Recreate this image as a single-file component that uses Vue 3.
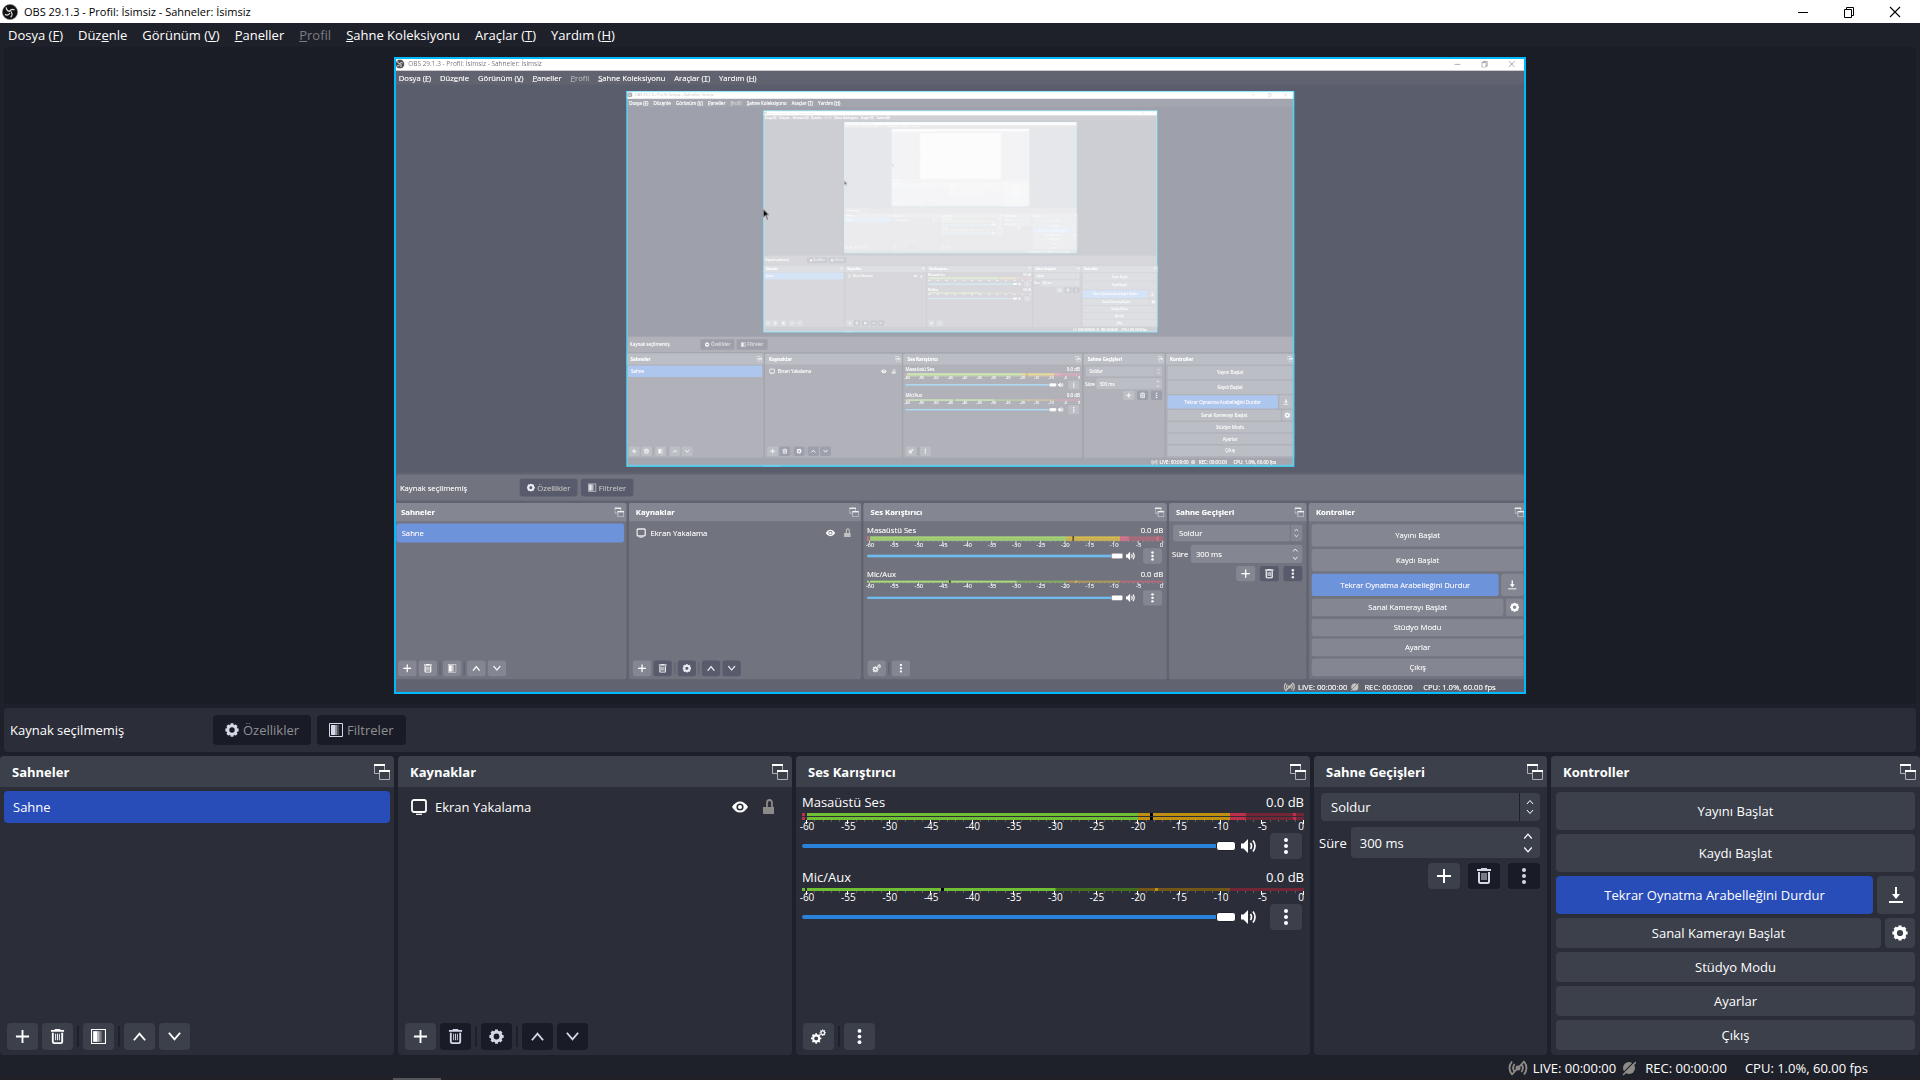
<template>
  <div :class="['studio', { nested: depth > 0 }]">
    <!-- shared icons and the capture gamma, only needed once -->
    <svg v-if="depth === 0" class="defs" aria-hidden="true">
      <filter id="capture-gamma" color-interpolation-filters="sRGB" x="0" y="0" width="1" height="1">
        <feComponentTransfer>
          <feFuncR type="gamma" exponent="0.455" />
          <feFuncG type="gamma" exponent="0.455" />
          <feFuncB type="gamma" exponent="0.455" />
        </feComponentTransfer>
      </filter>
      <symbol id="i-logo" viewBox="0 0 16 16">
        <circle cx="8" cy="8" r="7.6" fill="#111" stroke="#777" stroke-width=".6" />
        <g fill="none" stroke="#ddd" stroke-width="1.2">
          <path d="M4.2 3.4c.2 2.4 1.6 3.9 3.9 4" />
          <path d="M12.6 6c-2-1-4-.5-5 1.4" />
          <path d="M8.6 13.2c1.8-1.4 2.1-3.8.2-5.8" />
          <path d="M3 10.4c2 1.1 4 .4 5-1.4" />
        </g>
      </symbol>
      <symbol id="i-minimize" viewBox="0 0 12 12">
        <path d="M1 6.5h10" stroke="#000" />
      </symbol>
      <symbol id="i-restore" viewBox="0 0 12 12">
        <path d="M1.5 3.5h7v8h-7zM3.5 3.5v-2h7v8h-2" fill="none" stroke="#000" />
      </symbol>
      <symbol id="i-close" viewBox="0 0 12 12">
        <path d="M1 1l10 10M11 1L1 11" stroke="#000" stroke-width="1.1" />
      </symbol>
      <symbol id="i-popout" viewBox="0 0 16 16">
        <g fill="none" stroke="currentColor" opacity=".75">
          <path d="M5 9.5H.5v-9h10V6" />
          <path d="M5.5 6.5h10v9h-10z" />
        </g>
        <path d="M0 0h11v2H0zM5 6h11v2H5z" fill="#fff" />
      </symbol>
      <symbol id="i-plus" viewBox="0 0 16 16">
        <path d="M8 1v14M1 8h14" stroke="currentColor" stroke-width="2" />
      </symbol>
      <symbol id="i-trash" viewBox="0 0 16 16">
        <path d="M5 0h6v1h4v2H1V1h4z" fill="currentColor" />
        <path d="M3 4v9.5q0 1.5 1.5 1.5h7q1.5 0 1.5-1.5V4" fill="none" stroke="currentColor" stroke-width="2" />
        <path d="M6 5v7M8 5v7M10 5v7" stroke="currentColor" />
      </symbol>
      <symbol id="i-filter" viewBox="0 0 14 14">
        <path d="M.5.5h13v13H.5z" fill="none" stroke="currentColor" />
        <path d="M2 2h4v10H2z" fill="currentColor" />
        <path d="M6 2h2v10H6z" fill="currentColor" opacity=".65" />
        <path d="M8 2h2v10H8z" fill="currentColor" opacity=".3" />
      </symbol>
      <symbol id="i-gear" viewBox="0 0 16 16">
        <circle cx="8" cy="8" r="4.8" fill="none" stroke="currentColor" stroke-width="3.4" />
        <path d="M8 .4v2.6M8 13v2.6M.4 8h2.6M13 8h2.6M2.7 2.7l1.8 1.8M11.5 11.5l1.8 1.8M13.3 2.7l-1.8 1.8M4.5 11.5l-1.8 1.8" stroke="currentColor" stroke-width="3.2" />
      </symbol>
      <symbol id="i-gears" viewBox="0 0 16 16">
        <circle cx="5.5" cy="10" r="3.2" fill="none" stroke="currentColor" stroke-width="2.2" />
        <path d="M5.5 4.4v2M5.5 13.6v2M0 10h2M9 10h2M1.6 6.1l1.4 1.4M8 12.5l1.4 1.4M9.4 6.1L8 7.5M3 12.5l-1.4 1.4" stroke="currentColor" stroke-width="1.8" />
        <circle cx="12.5" cy="4" r="1.9" fill="none" stroke="currentColor" stroke-width="1.3" />
        <path d="M12.5.6v1.2M12.5 6.2v1.2M9.1 4h1.2M14.7 4h1.2M10.1 1.6l.8.8M14.1 5.6l.8.8M14.9 1.6l-.8.8M10.9 5.6l-.8.8" stroke="currentColor" stroke-width="1.2" />
      </symbol>
      <symbol id="i-up" viewBox="0 0 16 16">
        <path d="M2 12l6-7 6 7" fill="none" stroke="currentColor" stroke-width="2" />
      </symbol>
      <symbol id="i-down" viewBox="0 0 16 16">
        <path d="M2 4l6 7 6-7" fill="none" stroke="currentColor" stroke-width="2" />
      </symbol>
      <symbol id="i-dots" viewBox="0 0 16 16">
        <g fill="currentColor">
          <circle cx="8" cy="2" r="2" />
          <circle cx="8" cy="8" r="2" />
          <circle cx="8" cy="14" r="2" />
        </g>
      </symbol>
      <symbol id="i-display" viewBox="0 0 16 16">
        <rect x="1" y="1" width="14" height="12" rx="2" fill="none" stroke="currentColor" stroke-width="1.8" />
        <path d="M5 15.3h6" stroke="currentColor" stroke-width="1.2" />
      </symbol>
      <symbol id="i-eye" viewBox="0 0 16 16">
        <path d="M0 8q3.5-5.5 8-5.5T16 8q-3.5 5.5-8 5.5T0 8z" fill="currentColor" />
        <circle cx="8" cy="8" r="3.6" fill="#2b2d38" />
        <circle cx="8" cy="8" r="2" fill="currentColor" />
      </symbol>
      <symbol id="i-unlock" viewBox="0 0 16 16">
        <path d="M3 8h11v7H3z" fill="currentColor" />
        <path d="M12 8V4Q12 1 9.5 1T7 4v4" fill="none" stroke="currentColor" stroke-width="1.8" />
      </symbol>
      <symbol id="i-speaker" viewBox="0 0 16 16">
        <path d="M0 5.5h2.5L7 1v14l-4.5-4.5H0z" fill="currentColor" />
        <path d="M9.5 5q2 3 0 6M12 2.5q4 5.5 0 11" fill="none" stroke="currentColor" stroke-width="1.7" />
      </symbol>
      <symbol id="i-save" viewBox="0 0 16 16">
        <path d="M8 0v9M1 15h14" stroke="currentColor" stroke-width="2" />
        <path d="M4 7h8l-4 5z" fill="currentColor" />
      </symbol>
      <symbol id="i-live" viewBox="0 0 20 16">
        <g fill="none" stroke="currentColor" stroke-width="1.8">
          <path d="M4 1.500q-5 6.500 0 13M16 1.500q5 6.500 0 13M6.600 4q-3 4 0 8M13.400 4q3 4 0 8M3.500 15L16.500 1" />
          <circle cx="10" cy="8" r="1.6" />
        </g>
      </symbol>
      <symbol id="i-rec" viewBox="0 0 14 16">
        <circle cx="7" cy="8" r="6" fill="currentColor" />
        <path d="M0 14L13 1" stroke="#1f212a" stroke-width="1.2" />
        <path d="M1 15L14 2" stroke="currentColor" stroke-width="1.6" />
      </symbol>
    </svg>

    <header class="titlebar">
      <svg class="icon"><use href="#i-logo" /></svg>
      <span class="window-title">OBS 29.1.3 - Profil: İsimsiz - Sahneler: İsimsiz</span>
      <div class="window-buttons">
        <button v-for="name in ['minimize', 'restore', 'close']" :key="name" type="button" :aria-label="name">
          <svg><use :href="`#i-${name}`" /></svg>
        </button>
      </div>
    </header>

    <nav class="menubar">
      <button v-for="item in menu" :key="item.key + item.before" type="button" :disabled="item.disabled">
        {{ item.before }}<u>{{ item.key }}</u>{{ item.after }}
      </button>
    </nav>

    <main class="preview">
      <div class="canvas">
        <svg v-if="depth < maxDepth" class="capture" :viewBox="`0 0 ${base.width} ${base.height}`">
          <foreignObject :width="base.width" :height="base.height">
            <StudioWindow :depth="depth + 1" />
          </foreignObject>
        </svg>
        <!-- too small to show a window any more, just the light centre -->
        <div v-else class="washed-out"></div>
      </div>
    </main>

    <section class="context-bar">
      <span class="context-label">Kaynak seçilmemiş</span>
      <button type="button" class="btn" disabled>
        <svg class="icon"><use href="#i-gear" /></svg>Özellikler
      </button>
      <button type="button" class="btn" disabled>
        <svg class="icon"><use href="#i-filter" /></svg>Filtreler
      </button>
    </section>

    <div class="docks">
      <section class="dock">
        <h2>Sahneler<svg class="icon"><use href="#i-popout" /></svg></h2>
        <ul class="list">
          <li class="selected">Sahne</li>
        </ul>
        <div class="toolbar">
          <template v-for="(tool, i) in sceneTools" :key="i">
            <i v-if="tool === '|'" class="separator"></i>
            <button v-else type="button" class="btn tool" :aria-label="tool">
              <svg class="icon"><use :href="`#i-${tool}`" /></svg>
            </button>
          </template>
        </div>
      </section>

      <section class="dock">
        <h2>Kaynaklar<svg class="icon"><use href="#i-popout" /></svg></h2>
        <ul class="list">
          <li class="source">
            <svg class="icon"><use href="#i-display" /></svg>
            <span>Ekran Yakalama</span>
            <svg class="icon"><use href="#i-eye" /></svg>
            <svg class="icon unlocked"><use href="#i-unlock" /></svg>
          </li>
        </ul>
        <div class="toolbar">
          <template v-for="(tool, i) in sourceTools" :key="i">
            <i v-if="tool === '|'" class="separator"></i>
            <button v-else type="button" class="btn tool" :aria-label="tool" :disabled="tool !== 'plus'">
              <svg class="icon"><use :href="`#i-${tool}`" /></svg>
            </button>
          </template>
        </div>
      </section>

      <section class="dock">
        <h2>Ses Karıştırıcı<svg class="icon"><use href="#i-popout" /></svg></h2>
        <div class="mixer">
          <div v-for="ch in channels" :key="ch.name" class="channel">
            <div class="channel-head">
              <label :for="uid + ch.name">{{ ch.name }}</label>
              <span>0.0 dB</span>
            </div>
            <div v-for="n in ch.bars" :key="n" class="meter">
              <i :class="['clip', ch.clip]"></i>
              <div class="bar">
                <i class="level" :style="{ clipPath: `inset(0 ${100 - ch.level}% 0 0)` }"></i>
                <i class="mark" :style="{ left: ch.magnitude + '%' }"></i>
                <i :class="['mark', ch.holdColor]" :style="{ left: ch.hold + '%' }"></i>
              </div>
            </div>
            <div class="scale">
              <i v-for="n in 61" :key="n" :class="{ major: (n - 1) % 5 === 0 }"></i>
            </div>
            <div class="scale-labels">
              <span v-for="db in scaleLabels" :key="db">{{ db }}</span>
            </div>
            <div class="channel-controls">
              <input :id="uid + ch.name" type="range" min="0" max="100" value="100" />
              <button type="button" class="mute" aria-label="mute">
                <svg class="icon"><use href="#i-speaker" /></svg>
              </button>
              <button type="button" class="btn small" aria-label="menu">
                <svg class="icon"><use href="#i-dots" /></svg>
              </button>
            </div>
          </div>
        </div>
        <div class="toolbar">
          <button type="button" class="btn tool" aria-label="gears">
            <svg class="icon"><use href="#i-gears" /></svg>
          </button>
          <i class="separator"></i>
          <button type="button" class="btn tool" aria-label="dots">
            <svg class="icon"><use href="#i-dots" /></svg>
          </button>
        </div>
      </section>

      <section class="dock">
        <h2>Sahne Geçişleri<svg class="icon"><use href="#i-popout" /></svg></h2>
        <div class="transitions">
          <div class="select-box">
            <select aria-label="Sahne Geçişleri">
              <option>Soldur</option>
            </select>
            <span class="arrows">
              <svg><use href="#i-up" /></svg>
              <svg><use href="#i-down" /></svg>
            </span>
          </div>
          <div class="duration">
            <label :for="uid + 'duration'">Süre</label>
            <div class="spin-box">
              <input :id="uid + 'duration'" type="text" value="300 ms" />
              <span class="arrows">
                <svg><use href="#i-up" /></svg>
                <svg><use href="#i-down" /></svg>
              </span>
            </div>
          </div>
          <div class="transition-buttons">
            <button type="button" class="btn small" aria-label="plus">
              <svg class="icon"><use href="#i-plus" /></svg>
            </button>
            <button type="button" class="btn small" aria-label="trash" disabled>
              <svg class="icon"><use href="#i-trash" /></svg>
            </button>
            <button type="button" class="btn small" aria-label="dots" disabled>
              <svg class="icon"><use href="#i-dots" /></svg>
            </button>
          </div>
        </div>
      </section>

      <section class="dock">
        <h2>Kontroller<svg class="icon"><use href="#i-popout" /></svg></h2>
        <div class="controls">
          <div v-for="c in controls" :key="c.label" :class="['control-row', { tall: c.tall }]">
            <button type="button" :class="['btn', { active: c.active }]">{{ c.label }}</button>
            <button v-if="c.icon" type="button" class="btn square" :aria-label="c.icon">
              <svg class="icon"><use :href="`#i-${c.icon}`" /></svg>
            </button>
          </div>
        </div>
      </section>
    </div>

    <footer class="statusbar">
      <svg class="live-icon"><use href="#i-live" /></svg>
      <span class="live">LIVE: 00:00:00</span>
      <svg class="rec-icon"><use href="#i-rec" /></svg>
      <span class="rec">REC: 00:00:00</span>
      <span>CPU: 1.0%, 60.00 fps</span>
    </footer>
    <div class="taskbar"><i></i></div>

    <!-- the capture includes the mouse cursor -->
    <svg v-if="depth > 0" class="cursor" viewBox="0 0 13 21">
      <path d="M.5.5v17l4-4 3 7 2.5-1-3-7h5.5z" fill="#000" stroke="#fff" stroke-width=".6" />
    </svg>
  </div>
</template>

<script setup>
import { useId } from 'vue'

defineOptions({ name: 'StudioWindow' })

defineProps({
  depth: {
    type: Number,
    default: 0
  }
})

const uid = useId()

// Base canvas resolution of the display capture
const base = { width: 1920, height: 1080 }
const maxDepth = 5

const menu = [
  { before: 'Dosya (', key: 'F', after: ')' },
  { before: 'Düz', key: 'e', after: 'nle' },
  { before: 'Görünüm (', key: 'V', after: ')' },
  { before: '', key: 'P', after: 'aneller' },
  { before: '', key: 'P', after: 'rofil', disabled: true },
  { before: '', key: 'S', after: 'ahne Koleksiyonu' },
  { before: 'Araçlar (', key: 'T', after: ')' },
  { before: 'Yardım (', key: 'H', after: ')' }
]

const sceneTools = ['plus', 'trash', '|', 'filter', '|', 'up', 'down']
const sourceTools = ['plus', 'trash', '|', 'gear', '|', 'up', 'down']

// level, magnitude and hold are percentages of the -60..0 dB range
const channels = [
  { name: 'Masaüstü Ses', bars: 2, clip: 'red', level: 88.3, magnitude: 69, hold: 97.7, holdColor: 'red' },
  { name: 'Mic/Aux', bars: 1, clip: 'green', level: 50, magnitude: 27, hold: 70, holdColor: 'yellow' }
]

const scaleLabels = Array.from({ length: 13 }, (_, i) => i * 5 - 60)

const controls = [
  { label: 'Yayını Başlat', tall: true },
  { label: 'Kaydı Başlat', tall: true },
  { label: 'Tekrar Oynatma Arabelleğini Durdur', tall: true, active: true, icon: 'save' },
  { label: 'Sanal Kamerayı Başlat', icon: 'gear' },
  { label: 'Stüdyo Modu' },
  { label: 'Ayarlar' },
  { label: 'Çıkış' }
]
</script>

<style>
body {
  background: #1f212a;
}
</style>

<style scoped>
.studio {
  position: relative;
  display: flex;
  flex-direction: column;
  height: 100vh;
  overflow: hidden;
  background: #1f212a;
  color: #fff;
  font-family: "Open Sans", "Noto Sans", sans-serif;
  font-size: 13px;
  line-height: 18px;
}

.studio.nested {
  height: 100%;
  pointer-events: none;
}

.studio *,
.studio *::after {
  box-sizing: border-box;
}

.defs {
  position: absolute;
  width: 0;
  height: 0;
}

button,
input,
select {
  margin: 0;
  padding: 0;
  border: 0;
  color: inherit;
  font: inherit;
}

.icon {
  flex: none;
  width: 16px;
  height: 16px;
}

/* title bar and menu */
.titlebar {
  display: flex;
  align-items: center;
  height: 23px;
  padding: 0 2px;
  background: #fff;
  color: #000;
}

.window-title {
  margin-left: 6px;
  font-size: 11px;
}

.window-buttons {
  display: flex;
  margin-left: auto;
}

.window-buttons button {
  width: 46px;
  height: 20px;
  background: none;
}

.window-buttons svg {
  display: block;
  width: 12px;
  height: 12px;
  margin: 0 auto;
}

.menubar {
  display: flex;
  height: 24px;
  padding-left: 1px;
}

.menubar button {
  padding: 0 8px 0 7px;
  background: none;
  white-space: nowrap;
}

.menubar button:disabled {
  color: #7b7c81;
}

/* preview */
.preview {
  display: flex;
  flex: 1 1 0;
  justify-content: center;
  min-height: 0;
  margin: 0 4px 4px;
  padding: 10px;
  background: #1a1c26;
}

.canvas {
  position: relative;
  aspect-ratio: 16 / 9;
  min-width: 0;
  background: #1f212a;
}

.canvas::after {
  content: '';
  position: absolute;
  inset: 0;
  border: 2px solid #00b9ff;
}

.capture {
  position: absolute;
  inset: 0;
  width: 100%;
  height: 100%;
  filter: url(#capture-gamma);
}

.washed-out {
  height: 100%;
  background: #9a9ba5;
}

.cursor {
  position: absolute;
  top: 256px;
  left: 625px;
  width: 13px;
  height: 21px;
}

/* buttons */
.btn {
  display: flex;
  align-items: center;
  justify-content: center;
  border-radius: 4px;
  background: #3c404b;
  white-space: nowrap;
}

.btn:disabled {
  background: #191b26;
  color: #8f9093;
}

.btn:disabled .icon {
  color: #d4d8e6;
}

.btn.active {
  background: #284cb8;
}

/* context bar */
.context-bar {
  display: flex;
  align-items: center;
  gap: 6px;
  height: 44px;
  margin: 0 4px 4px;
  padding: 0 6px;
  border-radius: 4px;
  background: #2b2d38;
}

.context-label {
  width: 197px;
}

.context-bar .btn {
  height: 30px;
  padding: 0 12px;
  gap: 4px;
}

.context-bar .icon {
  width: 14px;
  height: 14px;
}

/* docks */
.docks {
  display: grid;
  grid-template-columns: 394fr 394fr 514fr 233fr 369fr;
  gap: 4px;
  height: 299px;
}

.dock {
  display: flex;
  flex-direction: column;
  min-width: 0;
  border-radius: 4px;
  background: #2b2d38;
}

.dock h2 {
  display: flex;
  align-items: center;
  justify-content: space-between;
  height: 31px;
  margin: 0;
  padding: 0 4px 0 12px;
  border-radius: 4px 4px 0 0;
  background: #3c404b;
  font-size: 13px;
}

.dock h2 .icon {
  color: #d8d9dc;
}

.list {
  flex: 1;
  margin: 0;
  padding: 4px;
  list-style: none;
}

.list li {
  display: flex;
  align-items: center;
  height: 32px;
  padding: 0 9px;
  border-radius: 4px;
}

.list .selected {
  background: #284cb8;
}

.list .source {
  gap: 12px;
  padding-right: 12px;
}

.source span {
  flex: 1;
  margin-left: -4px;
}

.source .unlocked {
  color: #8c8a88;
}

.toolbar {
  display: flex;
  align-items: center;
  gap: 4px;
  margin-top: auto;
  padding: 0 7px 5px;
}

.tool {
  width: 31px;
  height: 27px;
}

.toolbar .icon {
  width: 15px;
  height: 15px;
}

.separator {
  width: 2px;
  height: 21px;
  background: #1f212a;
}

/* mixer */
.mixer {
  padding: 6px;
}

.channel {
  margin-bottom: 9px;
}

.channel-head {
  display: flex;
  justify-content: space-between;
  padding-bottom: 1px;
  line-height: 19px;
}

.meter {
  display: flex;
  gap: 2px;
  height: 3px;
  margin-bottom: 1px;
}

.meter .clip {
  width: 3px;
}

.bar {
  position: relative;
  flex: 1;
  background: linear-gradient(90deg, #42701c 66.7%, #735716 0 85.2%, #732635 0);
}

.level {
  position: absolute;
  inset: 0;
  background: linear-gradient(90deg, #70bf33 66.7%, #bf8f10 0 85.2%, #bf2f4b 0);
}

.mark {
  position: absolute;
  top: 0;
  width: 3px;
  height: 100%;
  background: #000;
}

.red {
  background: #bf2f4b;
}

.green {
  background: #70bf33;
}

.yellow {
  background: #bf8f10;
}

.scale {
  display: flex;
  justify-content: space-between;
  height: 4px;
  margin: -1px 0 0 4px;
}

.scale i {
  width: 1px;
  height: 2px;
  background: #5a5c65;
}

.scale .major {
  height: 4px;
  background: #fff;
}

.scale-labels {
  display: flex;
  justify-content: space-between;
  margin: -2px -12px 0 -7px;
  font-size: 10px;
  line-height: 8px;
}

.scale-labels span {
  width: 24px;
  text-align: center;
}

.scale-labels span:last-child {
  padding-right: 12px;
  text-align: right;
}

.channel-controls {
  display: flex;
  align-items: center;
  height: 26px;
  margin-top: 3px;
  padding-right: 2px;
}

.channel-controls input {
  flex: 1;
  min-width: 0;
  height: 12px;
  appearance: none;
  background: none;
}

.channel-controls input::-webkit-slider-runnable-track {
  height: 4px;
  border-radius: 2px;
  background: #2a82da;
}

.channel-controls input::-webkit-slider-thumb {
  width: 20px;
  height: 10px;
  margin-top: -3px;
  border: 1px solid #1f212a;
  border-radius: 3px;
  background: #fff;
  appearance: none;
}

.mute {
  height: 16px;
  margin: 0 13px 0 5px;
  background: none;
}

.mute .icon {
  display: block;
}

.small {
  width: 32px;
  height: 26px;
}

/* transitions */
.transitions {
  display: flex;
  flex-direction: column;
  padding: 6px 7px;
}

.select-box,
.spin-box {
  display: flex;
  border-radius: 4px;
  background: #3c404b;
}

.select-box {
  height: 28px;
}

.select-box select {
  flex: 1;
  min-width: 0;
  padding-left: 10px;
  border-right: 1px solid #1f212a;
  appearance: none;
  background: none;
}

.arrows {
  display: flex;
  flex-direction: column;
  align-items: center;
  justify-content: center;
  gap: 2px;
  width: 20px;
}

.arrows svg {
  width: 8px;
  height: 8px;
}

.duration {
  display: flex;
  align-items: center;
  gap: 4px;
  margin: 6px 0 0 -2px;
}

.spin-box {
  flex: 1;
  height: 31px;
  min-width: 0;
  padding-right: 2px;
}

.spin-box input {
  flex: 1;
  min-width: 0;
  padding-left: 9px;
  background: none;
}

.spin-box .arrows {
  gap: 4px;
}

.spin-box .arrows svg {
  width: 10px;
  height: 10px;
}

.transition-buttons {
  display: flex;
  justify-content: flex-end;
  gap: 8px;
  margin-top: 5px;
}

/* controls */
.controls {
  display: flex;
  flex-direction: column;
  gap: 4px;
  padding: 5px;
}

.control-row {
  display: flex;
  gap: 4px;
  height: 30px;
}

.control-row.tall {
  height: 38px;
}

.control-row .btn {
  flex: 1;
}

.control-row .square {
  flex: none;
  width: 30px;
}

.control-row.tall .square {
  width: 38px;
}

/* status bar */
.statusbar {
  display: flex;
  align-items: center;
  justify-content: flex-end;
  height: 23px;
  padding: 3px 52px 0 0;
}

.live-icon,
.rec-icon {
  width: 20px;
  height: 16px;
  color: #8f8c88;
}

.rec-icon {
  width: 14px;
}

.live {
  margin: 0 6px 0 5px;
}

.rec {
  margin: 0 18px 0 9px;
}

.taskbar {
  height: 2px;
  padding-left: 393px;
  background: #231f26;
}

.taskbar i {
  display: block;
  width: 48px;
  height: 2px;
  background: #55565c;
}
</style>
